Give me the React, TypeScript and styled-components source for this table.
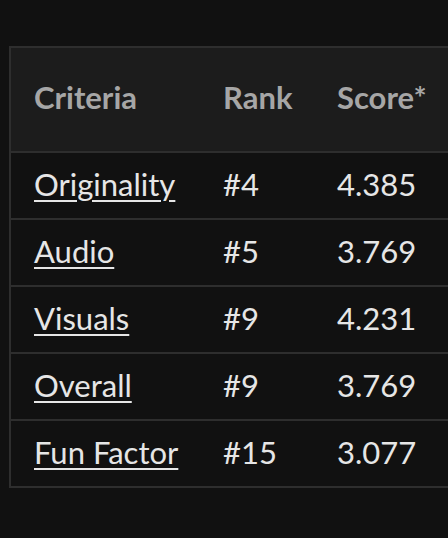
import React from "react";
import styled, { createGlobalStyle } from "styled-components";

const Global = createGlobalStyle`
  html, body { margin: 0; padding: 0; background: #111111; overflow: hidden; }
  body { font-family: Lato, "Open Sans", sans-serif; }
`;

const Page = styled.div`
  padding: 46px 0 0 9px;
  width: 448px;
  height: 538px;
  box-sizing: border-box;
`;

const Table = styled.table`
  border-collapse: collapse;
  border: 2px solid #2e2e2e;
  border-right: none;
  width: 480px;
  table-layout: fixed;
`;

const HeadRow = styled.tr`
  background: #1c1c1c;
  height: 105px;
`;

const Th = styled.th<{ $w: number }>`
  box-sizing: border-box;
  width: ${(p) => p.$w}px;
  text-align: left;
  padding: 0 0 6px 23px;
  font-weight: 700;
  font-size: 31px;
  color: #a6a6a6;
  border-bottom: 2px solid #2e2e2e;
  white-space: nowrap;
`;

const Row = styled.tr`
  height: 67px;
  border-bottom: 2px solid #2e2e2e;
`;

const Td = styled.td`
  padding: 0 0 4px 23px;
  font-size: 31px;
  color: #e6e6e6;
  white-space: nowrap;
`;

const Link = styled.a`
  color: #e6e6e6;
  text-decoration: underline;
  text-decoration-thickness: 2px;
  text-underline-offset: 4px;
`;

const rows = [
  ["Originality", "#4", "4.385"],
  ["Audio", "#5", "3.769"],
  ["Visuals", "#9", "4.231"],
  ["Overall", "#9", "3.769"],
  ["Fun Factor", "#15", "3.077"],
];

export default function App() {
  return (
    <>
      <Global />
      <Page>
        <Table>
          <thead>
            <HeadRow>
              <Th $w={190}>Criteria</Th>
              <Th $w={114}>Rank</Th>
              <Th $w={176}>Score*</Th>
            </HeadRow>
          </thead>
          <tbody>
            {rows.map((r) => (
              <Row key={r[0]}>
                <Td>
                  <Link href="#">{r[0]}</Link>
                </Td>
                <Td>{r[1]}</Td>
                <Td>{r[2]}</Td>
              </Row>
            ))}
          </tbody>
        </Table>
      </Page>
    </>
  );
}
